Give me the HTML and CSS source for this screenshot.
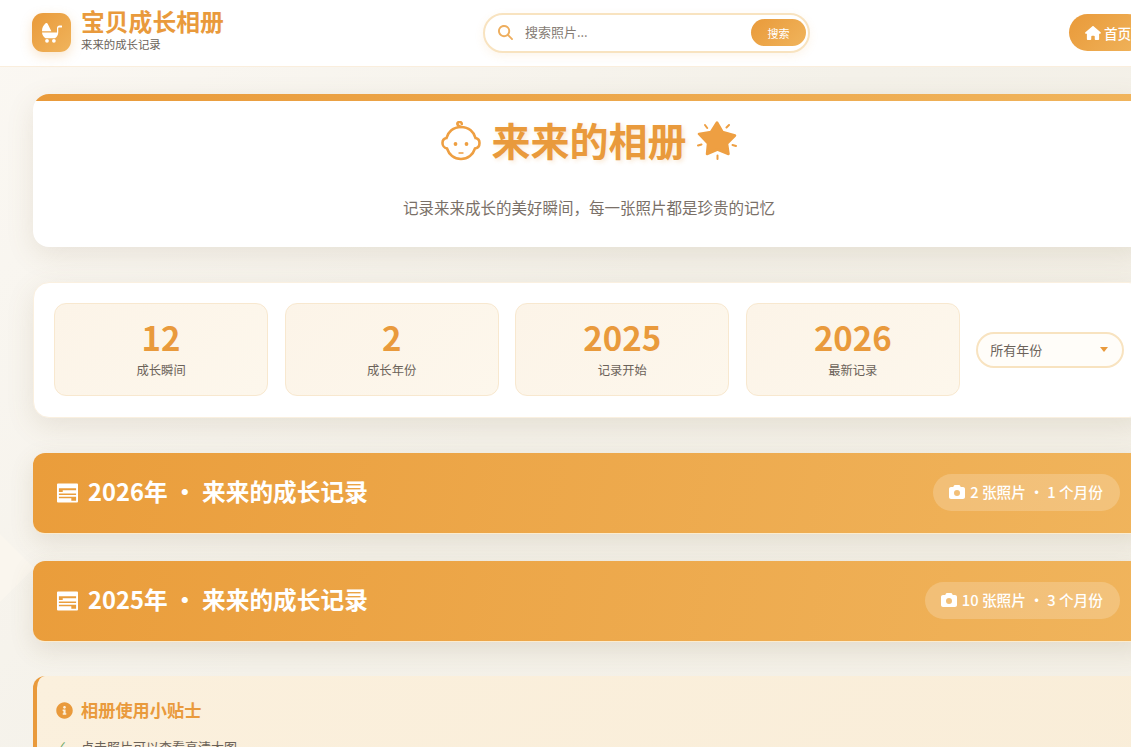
FILE: index.html
```html
<!DOCTYPE html>
<html lang="zh-CN">
  <head>
    <meta charset="UTF-8" />
    <meta name="viewport" content="width=device-width, initial-scale=1.0" />
    <title>来来的相册</title>
    <link rel="stylesheet" href="styles.css">
  </head>
  <body>
    <div class="page">
      <header class="topbar">
        <div class="brand">
          <div class="brand-logo">
            <svg class="brand-icon" viewBox="0 0 512 512">
              <path d="M145 17C134 0 109-6 93 7 30 58 0 130 0 208h240z" />
              <path d="M496 64h-48c-35 0-64 29-64 64v112H0c5 62 40 116 92 148h240c52-32 84-86 84-148V128c0-9 7-16 16-16h64c13 0 24-11 24-24s-11-24-24-24z" />
              <circle cx="128" cy="456" r="48" />
              <circle cx="304" cy="456" r="48" />
            </svg>
          </div>
          <div class="brand-text">
            <h1>宝贝成长相册</h1>
            <p>来来的成长记录</p>
          </div>
        </div>
        <form class="search">
          <svg class="search-icon" viewBox="0 0 512 512">
            <path d="M416 208c0 45.900-14.900 88.300-40 122.700L502.600 457.400c12.500 12.500 12.500 32.800 0 45.300s-32.800 12.500-45.300 0L330.700 376c-34.400 25.200-76.800 40-122.700 40C93.100 416 0 322.900 0 208S93.100 0 208 0S416 93.100 416 208zM208 352a144 144 0 1 0 0-288 144 144 0 1 0 0 288z" />
          </svg>
          <input type="text" placeholder="搜索照片..." />
          <button type="button">搜索</button>
        </form>
        <a class="nav-home" href="#">
          <svg viewBox="0 0 576 512">
            <path d="M575.800 255.500c0 18-15 32.100-32 32.100h-32l.7 160.200c0 2.700-.2 5.400-.5 8.100V472c0 22.100-17.900 40-40 40H456c-1.100 0-2.200 0-3.300-.1c-1.400 .1-2.800 .1-4.200 .1H416 392c-22.100 0-40-17.900-40-40V448 384c0-17.700-14.300-32-32-32H256c-17.700 0-32 14.300-32 32v64 24c0 22.100-17.900 40-40 40H160 128.100c-1.500 0-3-.1-4.500-.2c-1.200 .1-2.400 .2-3.600 .2H104c-22.100 0-40-17.900-40-40V360c0-.9 0-1.900 .1-2.800V287.600H32c-18 0-32-14-32-32.100c0-9 3-17 10-24L266.400 8c7-7 15-8 22-8s15 2 21 7L564.800 231.500c8 7 12 15 11 24z" />
          </svg>
          首页
        </a>
      </header>

      <main class="content">
        <section class="hero">
          <h2>
            <svg class="hero-baby" viewBox="0 0 40 40">
              <path d="M20 6C12 6 7 11 5.500 17 2.500 17.500 1.500 20 1.500 22s1.500 5 4.500 5.500C8 33.500 13 38 20 38s12-4.500 14-10.500c3-.5 4.500-3 4.500-5.500s-1-4.500-4-5C33 11 28 6 20 6z" />
              <path d="M20 6c-3-.8-4.500-3-3-4.500 1.500-1.200 3.800-.5 3.800 1.500" />
              <circle class="fill" cx="14.500" cy="23" r="1.900" />
              <circle class="fill" cx="25.500" cy="23" r="1.900" />
              <path class="mouth" d="M18 32h4" />
            </svg>
            <span class="hero-title">来来的相册</span>
            <svg class="hero-star" viewBox="0 0 40 40">
              <path d="M20 1.500l5.500 9.500 12.500 3.500-8 8 1.500 10.500-11-4.500L10 33l1-10.500L2 13l12-2z" />
              <path class="spark" d="M8 4l2.200 3M32 4l-2.500 2.500M1 24.500l3.500-1M39 25l-3.500-1M20.500 34.500V38" />
            </svg>
          </h2>
          <p>记录来来成长的美好瞬间，每一张照片都是珍贵的记忆</p>
        </section>

        <section class="stats">
          <div class="stat">
            <strong>12</strong>
            <span>成长瞬间</span>
          </div>
          <div class="stat">
            <strong>2</strong>
            <span>成长年份</span>
          </div>
          <div class="stat">
            <strong>2025</strong>
            <span>记录开始</span>
          </div>
          <div class="stat">
            <strong>2026</strong>
            <span>最新记录</span>
          </div>
          <div class="year-select">
            所有年份
            <i class="caret"></i>
          </div>
        </section>

        <section class="year-bar">
          <h3>
            <svg class="news-icon" viewBox="0 0 22 20">
              <path d="M0 1a1 1 0 0 1 1-1h20a1 1 0 0 1 1 1v18a1 1 0 0 1-1 1H1a1 1 0 0 1-1-1zM2 5v4h4V7h14V5zM2 10.500v1.500h18v-1.500zM2 14v1.500h13V18h5v-4z" fill-rule="evenodd" />
            </svg>
            <span>2026年 · 来来的成长记录</span>
          </h3>
          <div class="year-count">
            <svg viewBox="0 0 512 512">
              <path d="M149.100 64.800L138.700 96H64C28.700 96 0 124.700 0 160V416c0 35.300 28.700 64 64 64H448c35.300 0 64-28.700 64-64V160c0-35.300-28.700-64-64-64H373.300L362.900 64.800C356.400 45.200 338.100 32 317.400 32H194.600c-20.700 0-39 13.200-45.500 32.800zM256 192a96 96 0 1 1 0 192 96 96 0 1 1 0-192z" />
            </svg>
            2 张照片 · 1 个月份
          </div>
        </section>

        <section class="year-bar">
          <h3>
            <svg class="news-icon" viewBox="0 0 22 20">
              <path d="M0 1a1 1 0 0 1 1-1h20a1 1 0 0 1 1 1v18a1 1 0 0 1-1 1H1a1 1 0 0 1-1-1zM2 5v4h4V7h14V5zM2 10.500v1.500h18v-1.500zM2 14v1.500h13V18h5v-4z" fill-rule="evenodd" />
            </svg>
            <span>2025年 · 来来的成长记录</span>
          </h3>
          <div class="year-count">
            <svg viewBox="0 0 512 512">
              <path d="M149.100 64.800L138.700 96H64C28.700 96 0 124.700 0 160V416c0 35.300 28.700 64 64 64H448c35.300 0 64-28.700 64-64V160c0-35.300-28.700-64-64-64H373.300L362.900 64.800C356.400 45.200 338.100 32 317.400 32H194.600c-20.700 0-39 13.200-45.500 32.800zM256 192a96 96 0 1 1 0 192 96 96 0 1 1 0-192z" />
            </svg>
            10 张照片 · 3 个月份
          </div>
        </section>

        <section class="tips">
          <h4>
            <svg viewBox="0 0 512 512">
              <path d="M256 8C119 8 8 119 8 256s111 248 248 248 248-111 248-248S393 8 256 8zm0 110c23.200 0 42 18.800 42 42s-18.800 42-42 42-42-18.800-42-42 18.800-42 42-42zm56 254c0 6.600-5.400 12-12 12h-88c-6.600 0-12-5.400-12-12v-24c0-6.600 5.400-12 12-12h12v-64h-12c-6.600 0-12-5.400-12-12v-24c0-6.600 5.400-12 12-12h64c6.600 0 12 5.400 12 12v100h12c6.600 0 12 5.400 12 12v24z" />
            </svg>
            相册使用小贴士
          </h4>
          <ul>
            <li>点击照片可以查看高清大图</li>
          </ul>
        </section>
      </main>
    </div>
  </body>
</html>
```

FILE: styles.css
```css
* {
  box-sizing: border-box;
  margin: 0;
  padding: 0;
}

html,
body {
  height: 100%;
  overflow: hidden;
}

body {
  font-family: "Noto Sans CJK SC", "Noto Sans", sans-serif;
  background-color: #f8f5ef;
  color: #6b6259;
}

.page {
  position: relative;
  width: 1178px;
  min-height: 100%;
  background: linear-gradient(135deg, #fbf8f3 0%, #f4f1e9 45%, #f3efe5 100%);
}

/* faint decoration behind the cards */
.page::before {
  content: "";
  position: absolute;
  left: -24px;
  top: 544px;
  width: 48px;
  height: 48px;
  background: #faf6ee;
  transform: rotate(45deg);
}

.topbar {
  position: relative;
  height: 67px;
  padding: 0 32px 1px;
  display: flex;
  align-items: center;
  justify-content: space-between;
  background: #fff;
  border-bottom: 1px solid #faeedd;
}

.brand {
  display: flex;
  align-items: center;
  gap: 10px;
}

.brand-logo {
  width: 39px;
  height: 39px;
  border-radius: 11px;
  display: flex;
  align-items: center;
  justify-content: center;
  background: linear-gradient(135deg, #e99a3a, #f0b45c);
  box-shadow: 0 4px 12px rgba(232, 154, 60, 0.25);
}

.brand-icon {
  width: 20px;
  height: 20px;
  fill: #fff;
}

.brand-text {
  padding-bottom: 5px;
}

.brand-text h1 {
  font-size: 23.800px;
  line-height: 25px;
  margin-bottom: 4px;
  font-weight: 700;
  color: #e99a3c;
}

.brand-text p {
  font-size: 11.400px;
  line-height: 15px;
  color: #6b6259;
}

.search {
  width: 327px;
  height: 40px;
  padding: 0 2px 0 13px;
  display: flex;
  align-items: center;
  background: #fff;
  border: 2px solid #f8e3c0;
  border-radius: 20px;
  box-shadow: 0 3px 10px rgba(232, 154, 60, 0.1);
}

.search-icon {
  width: 15px;
  height: 15px;
  fill: #eeae5e;
  flex: none;
}

.search input {
  flex: 1;
  min-width: 0;
  margin-left: 12px;
  padding-bottom: 2px;
  border: none;
  outline: none;
  background: none;
  font-family: inherit;
  font-size: 13px;
  color: #6b6259;
}

.search input::placeholder {
  color: #857c74;
}

.search button {
  width: 55px;
  height: 27px;
  border: none;
  border-radius: 14px;
  font-family: inherit;
  font-size: 11px;
  color: #fff;
  background: linear-gradient(135deg, #e99a3a, #f0b45c);
}

.nav-home {
  width: 77px;
  height: 37px;
  padding-left: 16px;
  display: flex;
  align-items: center;
  gap: 3px;
  border-radius: 19px;
  font-size: 13.600px;
  font-weight: 500;
  color: #fff;
  text-decoration: none;
  white-space: nowrap;
  background: linear-gradient(135deg, #e99a3a, #f0b45c);
}

.nav-home svg {
  width: 16px;
  height: 14px;
  fill: #fff;
}

.content {
  position: relative;
  padding: 27px 33px 0;
}

.hero {
  position: relative;
  height: 153px;
  padding-top: 21px;
  background: #fff;
  border-radius: 16px;
  text-align: center;
  overflow: hidden;
  box-shadow: 0 8px 28px rgba(120, 100, 60, 0.13);
}

.hero::before {
  content: "";
  position: absolute;
  top: 0;
  left: 0;
  right: 0;
  height: 7px;
  background: linear-gradient(90deg, #e99a3a, #f0b45c);
}

.hero h2 {
  height: 52px;
  display: flex;
  align-items: center;
  justify-content: center;
  gap: 10px;
  font-size: 39px;
  line-height: 52px;
  font-weight: 700;
  color: #e99a3c;
  text-shadow: 2px 2px 4px rgba(232, 154, 60, 0.2);
}

.hero-title {
  padding-bottom: 4px;
}

.hero-baby {
  width: 40px;
  height: 40px;
  fill: none;
  stroke: #ee9f42;
  stroke-width: 2.600;
  stroke-linecap: round;
}

.hero-baby .fill {
  fill: #ee9f42;
  stroke: none;
}

.hero-baby .mouth {
  stroke-width: 1.400;
}

.hero-star {
  width: 40px;
  height: 40px;
  fill: #ee9f42;
  stroke: #ee9f42;
  stroke-width: 2.500;
  stroke-linejoin: round;
}

.hero-star .spark {
  fill: none;
  stroke-width: 2;
  stroke-linecap: round;
}

.hero p {
  margin-top: 29px;
  font-size: 15.500px;
  line-height: 22px;
  color: #7a7068;
}

.stats {
  margin-top: 35px;
  height: 136px;
  padding: 20px 20px 21px;
  display: flex;
  align-items: center;
  gap: 16.400px;
  background: #fff;
  border: 1px solid #faf0e0;
  border-radius: 16px;
  box-shadow: 0 8px 28px rgba(120, 100, 60, 0.13);
}

.stat {
  width: 214.200px;
  height: 93px;
  flex: none;
  display: flex;
  flex-direction: column;
  align-items: center;
  padding-top: 11px;
  background: linear-gradient(135deg, #fcf4e8, #fdf7ec);
  border: 1px solid #f8e8cf;
  border-radius: 12px;
}

.stat strong {
  font-size: 33px;
  line-height: 45px;
  font-weight: 700;
  color: #e99a3c;
}

.stat span {
  font-size: 12.300px;
  line-height: 20px;
  color: #6b6259;
}

.year-select {
  width: 148px;
  height: 36px;
  flex: none;
  padding: 0 13px 0 12px;
  display: flex;
  align-items: center;
  justify-content: space-between;
  font-size: 13px;
  color: #6b6259;
  background: #fffdf9;
  border: 2px solid #f8e3c0;
  border-radius: 18px;
}

.caret {
  width: 0;
  height: 0;
  margin-right: 1px;
  border-left: 4px solid transparent;
  border-right: 4px solid transparent;
  border-top: 5px solid #e99a3c;
}

.year-bar {
  margin-top: 35px;
  height: 81px;
  padding: 0 25px 2px 24px;
  display: flex;
  align-items: center;
  justify-content: space-between;
  color: #fff;
  background: linear-gradient(100deg, #ea9d3b, #f0b45c);
  border-bottom: 1px solid #fbeccf;
  border-radius: 12px;
  box-shadow: 0 8px 24px rgba(120, 100, 60, 0.14);
}

.year-bar + .year-bar {
  margin-top: 27px;
}

.year-bar h3 {
  display: flex;
  align-items: center;
  gap: 10px;
  padding-bottom: 2px;
  font-size: 23.700px;
  font-weight: 600;
}

.news-icon {
  width: 21px;
  height: 20px;
  margin-top: 4px;
  fill: #fff;
}

.year-count {
  height: 37px;
  padding: 0 17px 2px 16px;
  display: flex;
  align-items: center;
  gap: 5px;
  font-size: 14.700px;
  font-weight: 500;
  background: rgba(255, 255, 255, 0.2);
  border-radius: 19px;
}

.year-count svg {
  width: 16px;
  height: 16px;
  margin-top: 2px;
  fill: #fff;
}

.tips {
  margin-top: 34px;
  padding: 21px 19px;
  height: 200px;
  background: linear-gradient(135deg, #fbf0dd, #f9edd8);
  border-left: 4px solid #e99a3c;
  border-radius: 12px;
}

.tips h4 {
  display: flex;
  align-items: center;
  gap: 8px;
  font-size: 17.200px;
  line-height: 26px;
  font-weight: 700;
  color: #e99a3c;
}

.tips h4 svg {
  width: 17px;
  height: 17px;
  fill: #e99a3c;
}

.tips ul {
  margin-top: 12px;
  list-style: none;
}

.tips li {
  position: relative;
  padding-left: 25px;
  font-size: 13px;
  line-height: 24px;
  color: #6b6259;
}

.tips li::before {
  content: "✓";
  position: absolute;
  left: 0;
  color: #6fa86a;
}
```
